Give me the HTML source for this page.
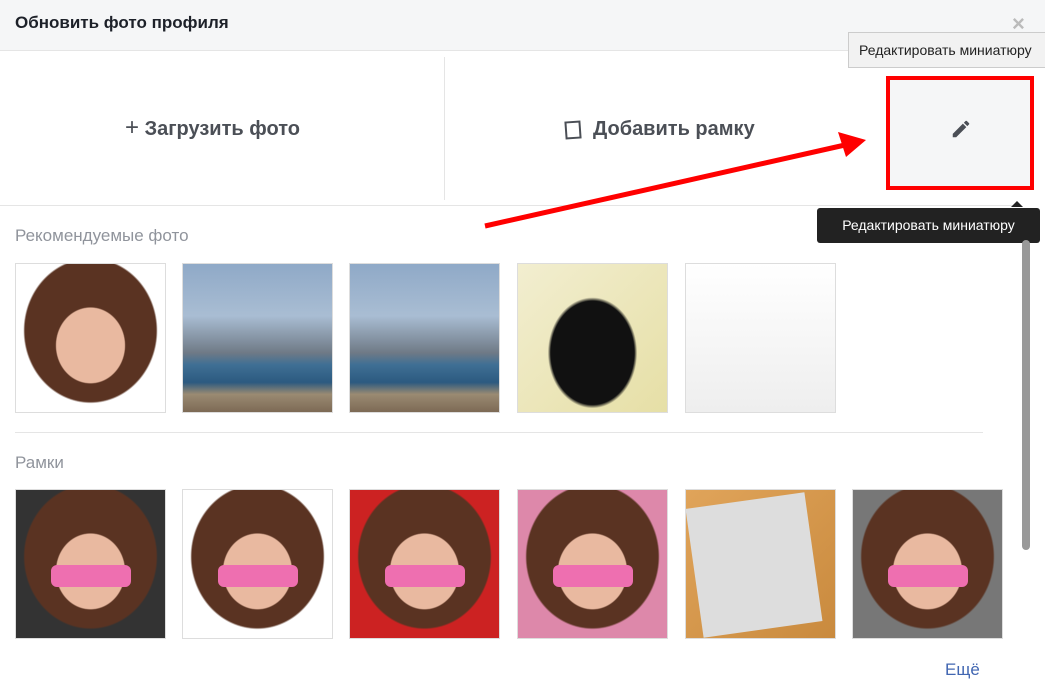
<!DOCTYPE html>
<html><head><meta charset="utf-8"><style>
body{margin:0;width:1045px;height:688px;overflow:hidden;background:#fff;font-family:"Liberation Sans","Noto Sans CJK SC",sans-serif;position:relative}
.a{position:absolute}
.hdr{left:0;top:0;width:1045px;height:50px;background:#f5f6f7;border-bottom:1px solid #e5e5e5}
.t{position:absolute;color:#1d2129;font-weight:bold}
.th{position:absolute;width:151px;height:150px;box-sizing:border-box;border:1px solid #ddd;overflow:hidden}
.face{background:radial-gradient(ellipse 38% 42% at 50% 55%,#e9b9a0 0 60%,transparent 62%),radial-gradient(ellipse 55% 60% at 50% 45%,#5a3322 0 80%,transparent 82%),#fff}
.fr .g{position:absolute;left:35px;top:75px;width:80px;height:22px;background:#ee6fb0;border-radius:6px}
.city{background:linear-gradient(#8fa9c7 0,#a9bdd3 35%,#6f7a86 60%,#3f6f94 68%,#2c5a80 80%,#9a8a72 88%,#7d6a55 100%)}
.cat{background:radial-gradient(ellipse 40% 50% at 50% 60%,#111 0 70%,transparent 75%),linear-gradient(135deg,#f2eed0,#e6dfa6)}
</style></head><body>
<div class="a hdr"></div>
<div class="t" style="left:15px;top:13px;font-size:17px">Обновить фото профиля</div>
<div class="a" style="left:1012px;top:11px;color:#bbb;font-size:22px;font-weight:bold">×</div>
<div class="a" style="left:444px;top:57px;width:1px;height:143px;background:#e5e5e5"></div>
<div class="a" style="left:0;top:205px;width:1020px;height:1px;background:#e5e5e5"></div>
<div class="t" style="left:125px;top:118px;font-size:20px;color:#4b4f56"><span style="font-weight:normal;font-size:24px;line-height:20px">+</span> Загрузить фото</div>
<div class="a" style="left:565px;top:121px;width:12px;height:14px;border:2px solid #4b4f56;transform:rotate(-4deg)"></div>
<div class="t" style="left:593px;top:118px;font-size:20px;color:#4b4f56">Добавить рамку</div>
<div class="a" style="left:886px;top:76px;width:148px;height:114px;box-sizing:border-box;border:4px solid #f00;background:#f5f6f7"></div>
<svg class="a" style="left:950px;top:118px" width="22" height="22" viewBox="0 0 24 24"><path d="M3 17.25V21h3.75L17.8 9.94l-3.75-3.75L3 17.25zM20.7 7.04a1 1 0 000-1.41l-2.34-2.34a1 1 0 00-1.41 0l-1.83 1.83 3.75 3.75 1.83-1.83z" fill="#4b4f56"/></svg>
<div class="a" style="left:848px;top:32px;width:200px;height:36px;background:#f2f2f2;border:1px solid #ccc;font-size:14px;line-height:34px;padding-left:10px;box-sizing:border-box;color:#222">Редактировать миниатюру</div>
<div class="a" style="left:1011px;top:201px;border:6px solid transparent;border-bottom-color:#222;border-top:0"></div>
<div class="a" style="left:817px;top:208px;width:223px;height:35px;background:#222;border-radius:3px;color:#fff;font-size:14px;line-height:35px;text-align:center">Редактировать миниатюру</div>
<div class="a" style="left:1022px;top:240px;width:8px;height:310px;background:#999;border-radius:4px"></div>
<svg class="a" style="left:0;top:0" width="1045" height="688"><line x1="485" y1="226" x2="845" y2="145" stroke="#f00" stroke-width="5"/><polygon points="866,140 838,132 846,157" fill="#f00"/></svg>
<div class="a" style="left:15px;top:226px;font-size:17px;color:#90949c">Рекомендуемые фото</div>
<div class="th face" style="left:15px;top:263px"></div>
<div class="th city" style="left:182px;top:263px"></div>
<div class="th city" style="left:349px;top:263px"></div>
<div class="th cat" style="left:517px;top:263px"></div>
<div class="th" style="left:685px;top:263px;background:linear-gradient(#fff,#eee)"></div>
<div class="a" style="left:15px;top:432px;width:968px;height:1px;background:#e5e5e5"></div>
<div class="a" style="left:15px;top:453px;font-size:17px;color:#90949c">Рамки</div>
<div class="th face fr" style="left:15px;top:489px;background-color:#333"><div class="g"></div></div>
<div class="th face fr" style="left:182px;top:489px"><div class="g"></div></div>
<div class="th face fr" style="left:349px;top:489px;background-color:#c22"><div class="g"></div></div>
<div class="th face fr" style="left:517px;top:489px;background-color:#d8a"><div class="g"></div></div>
<div class="th" style="left:685px;top:489px;background:linear-gradient(135deg,#e0a45a,#c98a3e)"><div class="a" style="left:8px;top:10px;width:120px;height:130px;background:#ddd;transform:rotate(-8deg)"></div></div>
<div class="th face fr" style="left:852px;top:489px;background-color:#777"><div class="g"></div></div>
<div class="a" style="left:945px;top:660px;font-size:17px;color:#4267b2">Ещё</div>
</body></html>
